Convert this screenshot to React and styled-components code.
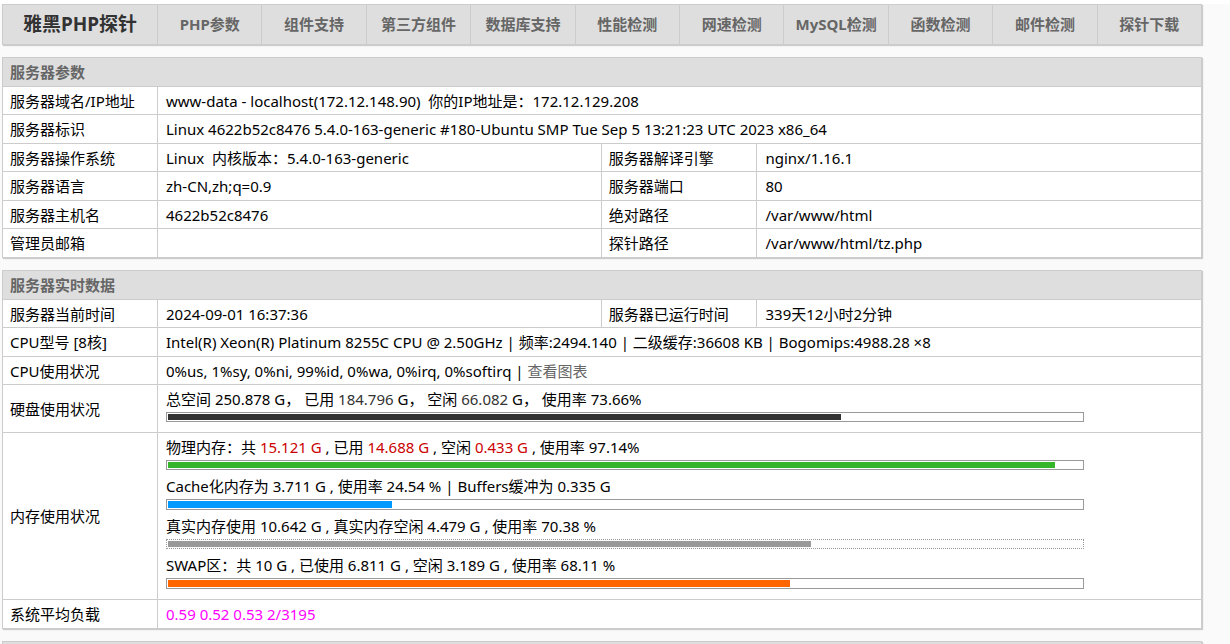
import React from "react";
import styled, { createGlobalStyle } from "styled-components";

const GlobalStyle = createGlobalStyle`
  * { box-sizing: border-box; }
  body {
    margin: 0;
    background: #fafafa;
    color: #000;
    font-family: "Noto Sans", "Noto Sans CJK SC", sans-serif;
    font-size: 15px;
    line-height: 20px;
  }
`;

const Page = styled.div`
  height: 100vh;
  overflow: hidden;
  padding: 0 28px 0 2px;
  border-top: 4px solid #fff;
  display: flex;
  flex-direction: column;
  gap: 12px;
`;

const Nav = styled.nav`
  flex: none;
  display: flex;
  height: 41px;
  border: 1px solid #ccc;
  background: #dedede;
  box-shadow: 1px 1px 1px #ccc;
`;

const Brand = styled.h1`
  flex: 0 0 154px;
  margin: 0;
  padding-bottom: 1px;
  display: flex;
  align-items: center;
  justify-content: center;
  color: #333;
  font-size: 19px;
  font-weight: 700;
  white-space: nowrap;
`;

const NavLink = styled.a`
  flex: 1 1 0;
  min-width: 0;
  padding-bottom: 2px;
  display: flex;
  align-items: center;
  justify-content: center;
  border-left: 1px solid #ccc;
  color: #666;
  font-weight: 700;
  text-decoration: none;
  white-space: nowrap;
`;

const Table = styled.table`
  flex: none;
  width: 100%;
  table-layout: fixed;
  border-collapse: collapse;
  background: #fff;
  box-shadow: 1px 1px 1px #ccc;
`;

const Col = styled.col`
  width: ${(p) => p.$width};
`;

const Row = styled.tr`
  height: 29px;
  &:nth-child(even) { height: 28px; }
`;

const Heading = styled.th`
  padding: 0 7px;
  border: 1px solid #ccc;
  background: #dedede;
  color: #666;
  font-weight: 700;
  text-align: left;
`;

const Label = styled.th`
  padding: 0 7px;
  border: 1px solid #ccc;
  font-weight: 400;
  text-align: left;
  white-space: nowrap;
`;

const Cell = styled.td`
  padding: 0 4px 0 8px;
  border: 1px solid #ccc;
  white-space: pre;
`;

const GaugeCell = styled(Cell)`
  padding-bottom: 10px;
`;

const Gauges = styled.div`
  display: flex;
  flex-direction: column;
  gap: 2px;
`;

const GaugeText = styled.div`
  padding-top: 2px;
  line-height: 25px;
`;

const Bar = styled.div`
  width: 89%;
  height: 10px;
  padding: 1px;
  border: 1px ${(p) => (p.$dotted ? "dotted" : "solid")} #999;
`;

const Fill = styled.div`
  height: 100%;
  background: ${(p) => p.$color};
`;

const GaugeBlock = styled.div`
  &:nth-child(even) ${Bar} { height: 11px; }
`;

const Tint = styled.span`
  color: ${(p) => p.$color};
`;

const ChartLink = styled.a`
  color: #666;
  text-decoration: none;
`;

const links = [
  "PHP参数", "组件支持", "第三方组件", "数据库支持", "性能检测",
  "网速检测", "MySQL检测", "函数检测", "邮件检测", "探针下载",
];

const Columns = () => (
  <colgroup>
    <Col $width="155px" />
    <Col $width="37%" />
    <Col $width="13%" />
    <Col $width="auto" />
  </colgroup>
);

const Title = ({ children }) => (
  <Row><Heading colSpan={4}>{children}</Heading></Row>
);

const Wide = ({ label, children }) => (
  <Row>
    <Label scope="row">{label}</Label>
    <Cell colSpan={3}>{children}</Cell>
  </Row>
);

const Pair = ({ items }) => (
  <Row>
    <Label scope="row">{items[0]}</Label>
    <Cell>{items[1]}</Cell>
    <Label scope="row">{items[2]}</Label>
    <Cell>{items[3]}</Cell>
  </Row>
);

const Gauge = ({ percent, color, dotted, children }) => (
  <GaugeBlock>
    <GaugeText>{children}</GaugeText>
    <Bar $dotted={dotted}>
      <Fill $color={color} style={{ width: `${percent}%` }} />
    </Bar>
  </GaugeBlock>
);

export default function App() {
  return (
    <>
      <GlobalStyle />
      <Page>
        <Nav>
          <Brand>雅黑PHP探针</Brand>
          {links.map((text) => <NavLink key={text} href="#">{text}</NavLink>)}
        </Nav>

        <Table>
          <Columns />
          <tbody>
            <Title>服务器参数</Title>
            <Wide label="服务器域名/IP地址">{"www-data - localhost(172.12.148.90)  你的IP地址是：172.12.129.208"}</Wide>
            <Wide label="服务器标识">Linux 4622b52c8476 5.4.0-163-generic #180-Ubuntu SMP Tue Sep 5 13:21:23 UTC 2023 x86_64</Wide>
            <Pair items={["服务器操作系统", "Linux  内核版本：5.4.0-163-generic", "服务器解译引擎", "nginx/1.16.1"]} />
            <Pair items={["服务器语言", "zh-CN,zh;q=0.9", "服务器端口", "80"]} />
            <Pair items={["服务器主机名", "4622b52c8476", "绝对路径", "/var/www/html"]} />
            <Pair items={["管理员邮箱", "", "探针路径", "/var/www/html/tz.php"]} />
          </tbody>
        </Table>

        <Table>
          <Columns />
          <tbody>
            <Title>服务器实时数据</Title>
            <Pair items={["服务器当前时间", "2024-09-01 16:37:36", "服务器已运行时间", "339天12小时2分钟"]} />
            <Wide label="CPU型号 [8核]">Intel(R) Xeon(R) Platinum 8255C CPU @ 2.50GHz | 频率:2494.140 | 二级缓存:36608 KB | Bogomips:4988.28 ×8</Wide>
            <Wide label="CPU使用状况">
              0%us, 1%sy, 0%ni, 99%id, 0%wa, 0%irq, 0%softirq | <ChartLink href="#">查看图表</ChartLink>
            </Wide>
            <Row>
              <Label scope="row">硬盘使用状况</Label>
              <GaugeCell colSpan={3}>
                <Gauge percent={73.66} color="#333">
                  总空间 250.878 G，{" "}已用 <Tint $color="#333">184.796</Tint> G，{" "}空闲 <Tint $color="#333">66.082</Tint> G，{" "}使用率 73.66%
                </Gauge>
              </GaugeCell>
            </Row>
            <Row>
              <Label scope="row">内存使用状况</Label>
              <GaugeCell colSpan={3}>
                <Gauges>
                  <Gauge percent={97.14} color="#35b52a">
                    物理内存：共 <Tint $color="#c00">15.121 G</Tint> , 已用 <Tint $color="#c00">14.688 G</Tint> , 空闲 <Tint $color="#c00">0.433 G</Tint> , 使用率 97.14%
                  </Gauge>
                  <Gauge percent={24.54} color="#0099ff">
                    Cache化内存为 3.711 G , 使用率 24.54 % | Buffers缓冲为 0.335 G
                  </Gauge>
                  <Gauge percent={70.38} color="#999" dotted>
                    真实内存使用 10.642 G , 真实内存空闲 4.479 G , 使用率 70.38 %
                  </Gauge>
                  <Gauge percent={68.11} color="#ff6600">
                    SWAP区：共 10 G , 已使用 6.811 G , 空闲 3.189 G , 使用率 68.11 %
                  </Gauge>
                </Gauges>
              </GaugeCell>
            </Row>
            <Wide label="系统平均负载"><Tint $color="#f0f">0.59 0.52 0.53 2/3195</Tint></Wide>
          </tbody>
        </Table>

        <Table>
          <Columns />
          <tbody>
            <Title />
          </tbody>
        </Table>
      </Page>
    </>
  );
}
